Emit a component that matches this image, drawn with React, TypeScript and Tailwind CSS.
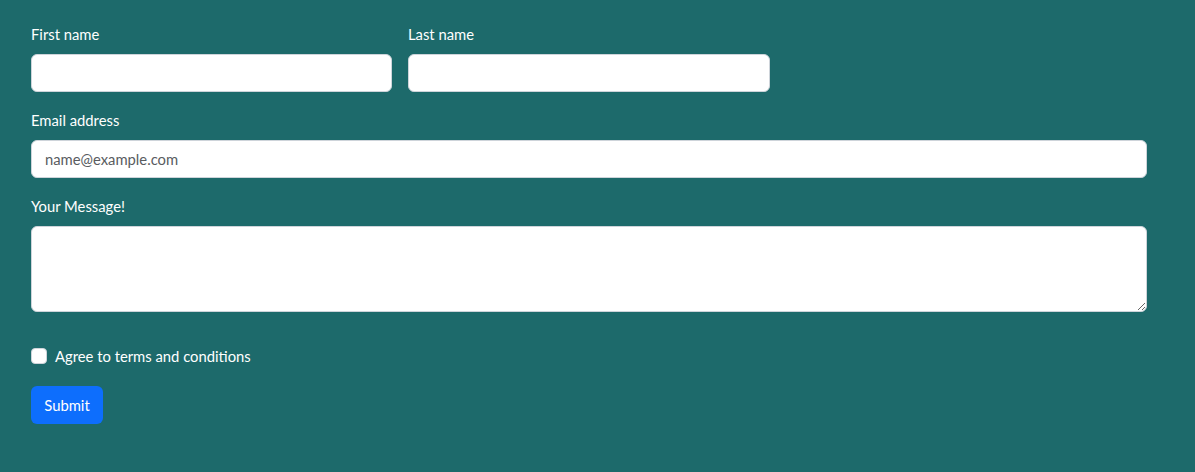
export default function App() {
  return (
    <div className="min-h-[472px] w-full bg-[#1d6a6b] px-[31px] pt-[26px] text-white font-['Lato','Open_Sans',sans-serif] text-[14.8px]">
      <form className="w-[1116px]" onSubmit={(e) => e.preventDefault()}>
        <div className="flex gap-[16px]">
          <div className="flex w-[361px] flex-col">
            <label className="mb-[8px] leading-[16px] pb-[4px]">First name</label>
            <input
              type="text"
              className="h-[38px] rounded-[6px] border border-[#ced4da] bg-white px-[13px] text-[#212529] outline-none"
            />
          </div>
          <div className="flex w-[362px] flex-col">
            <label className="mb-[8px] leading-[16px] pb-[4px]">Last name</label>
            <input
              type="text"
              className="h-[38px] rounded-[6px] border border-[#ced4da] bg-white px-[13px] text-[#212529] outline-none"
            />
          </div>
        </div>

        <div className="mt-[20px] flex flex-col">
          <label className="mb-[8px] leading-[16px] pb-[4px]">Email address</label>
          <input
            type="email"
            placeholder="name@example.com"
            className="h-[38px] rounded-[6px] border border-[#ced4da] bg-white px-[13px] text-[#212529] outline-none placeholder:text-[#595c5f]"
          />
        </div>

        <div className="mt-[20px] flex flex-col">
          <label className="mb-[8px] leading-[16px] pb-[4px]">Your Message!</label>
          <textarea className="h-[86px] rounded-[6px] border border-[#ced4da] bg-white px-[13px] py-[6px] text-[#212529] outline-none" />
        </div>

        <div className="mt-[34px] flex items-center gap-[8px]">
          <input type="checkbox" className="h-[16px] w-[16px] appearance-none rounded-[4px] border border-[#ced4da] bg-white" />
          <label className="leading-[20px]">Agree to terms and conditions</label>
        </div>

        <button
          type="submit"
          className="mt-[20px] h-[38px] w-[72px] rounded-[6px] bg-[#0d6efd] text-white"
        >
          Submit
        </button>
      </form>
    </div>
  );
}
